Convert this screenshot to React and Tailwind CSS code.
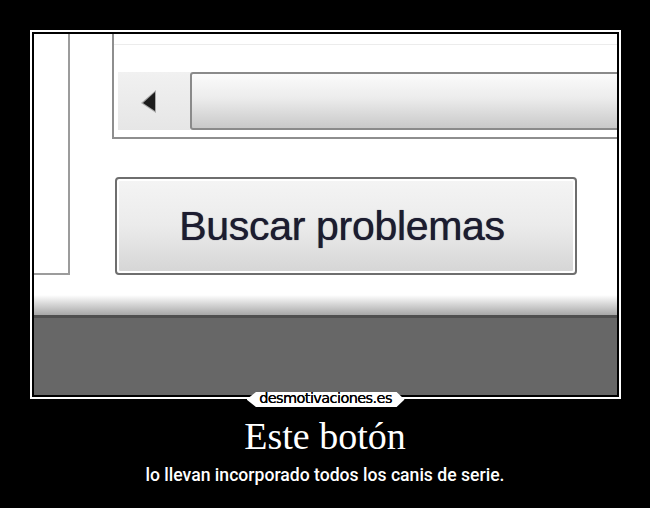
export default function App() {
  return (
    <div className="relative w-[650px] h-[508px] bg-black overflow-hidden">
      {/* framed screenshot */}
      <div className="relative ml-[30px] mt-[30px] w-[591px] h-[369px] border-2 border-white p-[2px] bg-black">
        <div className="flex flex-col w-full h-full bg-white overflow-hidden">
          <div className="flex h-[261px] shrink-0">
            {/* left pane */}
            <div className="w-[36px] h-[241px] border-r-2 border-b-2 border-[#9c9c9c] shrink-0" />

            <div className="flex flex-col flex-1 ml-[42px]">
              {/* list view with horizontal scrollbar */}
              <div className="flex flex-col h-[105px] border-l-2 border-b-2 border-[#8e8e8e]">
                <div className="mt-[10px] h-px bg-[#ececec]" />
                <div className="flex mt-[27px] h-[58px] ml-[4px]">
                  <div className="flex items-center pl-[22px] w-[72px] bg-gradient-to-b from-[#f1f1f1] to-[#e6e6e6]">
                    <svg width="20" height="28" viewBox="0 0 20 28">
                      <polygon points="1,16 16,3 16,26" fill="#a8a8a8" />
                      <polygon points="3,16 15,5 15,24" fill="#1c1c1c" />
                    </svg>
                  </div>
                  <div className="flex-1 border-2 border-r-0 border-[#8a8a8a] rounded-l-[3px] bg-gradient-to-b from-[#fbfbfb] via-[#ececec] via-45% to-[#c9c9c9]" />
                </div>
              </div>

              {/* the button */}
              <div className="mt-[38px] ml-[3px] w-[462px] h-[98px] rounded-[4px] border-2 border-[#6e6e6e] p-px">
                <div className="flex items-center justify-center h-full rounded-[2px] border border-white bg-gradient-to-b from-[#f4f4f4] via-[#ebebeb] via-50% to-[#d6d6d6]">
                  <span className="pr-[8px] font-['Liberation_Sans',Arial,sans-serif] text-[41px] leading-none tracking-[-0.3px] text-[#1c1c30] [text-shadow:0_0_0.8px_#1c1c30]">
                    Buscar problemas
                  </span>
                </div>
              </div>
            </div>
          </div>

          {/* window footer */}
          <div className="h-[20px] shrink-0 bg-gradient-to-b from-white to-[#a8a8a8]" />
          <div className="h-[3px] shrink-0 bg-[#4f4f4f]" />
          <div className="flex-1 bg-[#676767]" />
        </div>

        {/* site badge over the bottom edge */}
        <div className="absolute left-1/2 -translate-x-1/2 bottom-[-10px] w-[158px] h-[15px] bg-white [clip-path:polygon(6%_0,95%_0,100%_50%,95%_100%,6%_100%,0_50%)] flex items-center justify-center">
          <span className="font-['DejaVu_Sans',sans-serif] text-[14.5px] leading-none tracking-[-0.6px] text-black -mt-[2px] [text-shadow:0_0_0.4px_#000]">
            desmotivaciones.es
          </span>
        </div>
      </div>

      <div className="mt-[18px] text-center font-['Liberation_Serif','Times_New_Roman',serif] text-[38px] leading-none text-white">
        Este botón
      </div>
      <div className="mt-[12px] text-center font-['Roboto',sans-serif] font-medium text-[17.6px] leading-none text-white">
        lo llevan incorporado todos los canis de serie.
      </div>
    </div>
  );
}
